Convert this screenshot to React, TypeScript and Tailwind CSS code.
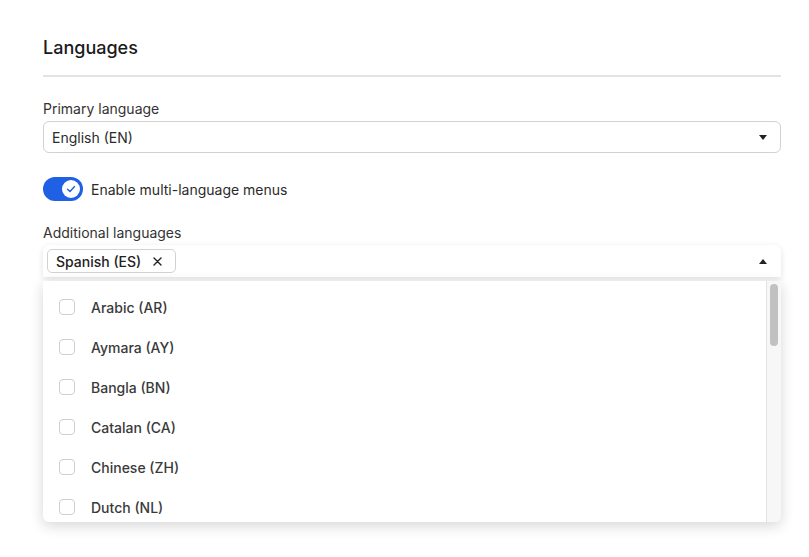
import React from "react";

const LANGS = ["Arabic (AR)", "Aymara (AY)", "Bangla (BN)", "Catalan (CA)", "Chinese (ZH)", "Dutch (NL)"];

function Caret({ up }: { up?: boolean }) {
  return (
    <svg width="8" height="5" viewBox="0 0 8 5" className="text-[#222]">
      {up ? <path d="M0 5 L4 0 L8 5 Z" fill="currentColor" /> : <path d="M0 0 L8 0 L4 5 Z" fill="currentColor" />}
    </svg>
  );
}

export default function App() {
  return (
    <div className="w-[809px] h-[557px] bg-white overflow-hidden pl-[43px] pr-[28px] pt-[36px] text-[#2b2b2b]" style={{ fontFamily: "Inter, 'Noto Sans', sans-serif" }}>
      {/* Header */}
      <h2 className="text-[18px] leading-[24px] font-medium text-[#1b1b1b] pb-[15px] border-b-2 border-[#e3e3e3]">Languages</h2>

      {/* Primary language */}
      <div className="mt-[22px]">
        <p className="text-[14px] leading-[20px] text-[#333]">Primary language</p>
        <div className="mt-[2px] h-[32px] rounded-[6px] border border-[#d2d2d2] flex items-center justify-between pl-[8px] pr-[13px]">
          <span className="text-[14px] text-[#2b2b2b]">English (EN)</span>
          <Caret />
        </div>
      </div>

      {/* Toggle */}
      <div className="mt-[24px] flex items-center gap-[8px]">
        <div className="w-[40px] h-[24px] rounded-full bg-[#1f60e4] flex items-center justify-end pr-[3px]">
          <div className="w-[18px] h-[18px] rounded-full bg-white flex items-center justify-center">
            <svg width="10" height="10" viewBox="0 0 10 10">
              <path d="M1.5 5.2 L4 7.5 L8.5 2.5" fill="none" stroke="#1f60e4" strokeWidth="1.4" strokeLinecap="round" strokeLinejoin="round" />
            </svg>
          </div>
        </div>
        <span className="text-[14px] text-[#2b2b2b]">Enable multi-language menus</span>
      </div>

      {/* Additional languages */}
      <div className="mt-[22px]">
        <p className="text-[14px] leading-[20px] text-[#333]">Additional languages</p>
        <div className="relative">
          <div className="mt-[2px] h-[32px] rounded-t-[6px] bg-white shadow-[0_2px_6px_rgba(0,0,0,0.12)] flex items-center justify-between pl-[4px] pr-[14px]">
            <div className="h-[24px] rounded-[5px] border border-[#d2d2d2] flex items-center gap-[12px] pl-[8px] pr-[13px]">
              <span className="text-[14px] font-medium text-[#222]">Spanish (ES)</span>
              <svg width="9" height="9" viewBox="0 0 9 9">
                <path d="M1 1 L8 8 M8 1 L1 8" stroke="#222" strokeWidth="1.4" strokeLinecap="round" />
              </svg>
            </div>
            <Caret up />
          </div>

          {/* Dropdown list */}
          <div className="absolute left-0 right-0 top-[36px] h-[241px] bg-white rounded-b-[6px] shadow-[0_4px_14px_rgba(0,0,0,0.16)] flex overflow-hidden">
            <div className="flex-1 pt-[6px]">
              {LANGS.map((l) => (
                <div key={l} className="h-[40px] flex items-center gap-[16px] pl-[16px]">
                  <div className="w-[16px] h-[16px] rounded-[4px] border border-[#cfcfcf] bg-white" />
                  <span className="text-[14px] font-medium text-[#3a3a3a]">{l}</span>
                </div>
              ))}
            </div>
            <div className="w-[15px] bg-[#f7f7f7] border-l border-[#e2e2e2] pt-[3px] flex justify-center">
              <div className="w-[8px] h-[62px] rounded-full bg-[#c1c1c1]" />
            </div>
          </div>
        </div>
      </div>
    </div>
  );
}
